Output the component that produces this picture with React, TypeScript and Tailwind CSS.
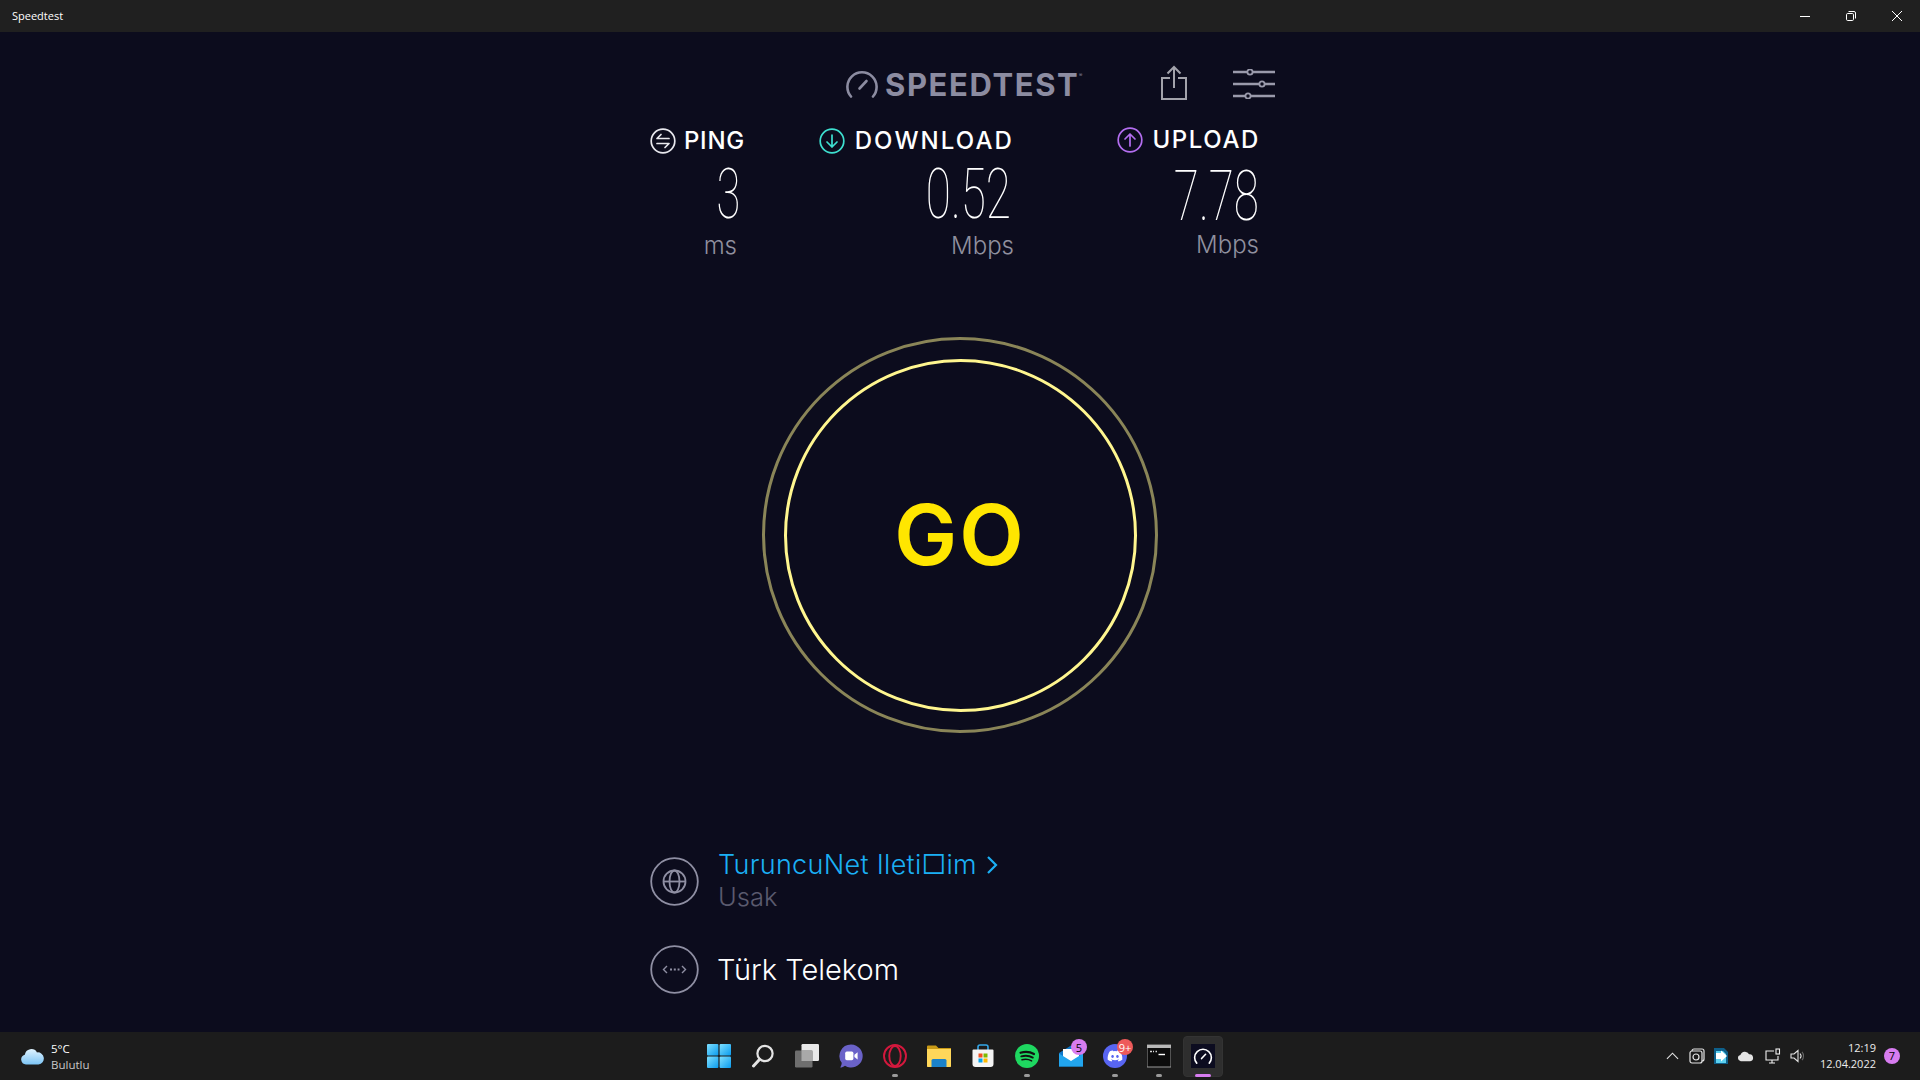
import React from "react";
import { FaDiscord } from "react-icons/fa";

const ui = { fontFamily: '"Open Sans", "Noto Sans", sans-serif' };
const brand = { fontFamily: 'Inter, "Liberation Sans", sans-serif' };

function Gauge({ className = "", stroke = "#8c8ca1", sw = 2.6 }: { className?: string; stroke?: string; sw?: number }) {
  return (
    <svg viewBox="0 0 34 28" className={className} fill="none" stroke={stroke} strokeWidth={sw} strokeLinecap="round">
      <path d="M6 26.5A14.6 14.6 0 1 1 28 26.5" />
      <path d="M14.5 18.5L21.5 11" />
    </svg>
  );
}

function Stat({ width, icon, label, value, unit, labelClass, valueClass, unitPr, scale }: any) {
  return (
    <div className="flex flex-col items-end" style={{ width }}>
      <div className={`flex h-[50px] items-center ${labelClass}`}>
        {icon}
        <span className="text-[24px] font-medium text-white">{label}</span>
      </div>
      <div className={`flex h-[56px] items-center ${valueClass}`}>
        <span
          className={`inline-block origin-right text-[70px] font-thin leading-[52px] text-white ${scale}`}
          style={{ fontFamily: 'Roboto, "Liberation Sans", sans-serif' }}
        >
          {value}
        </span>
      </div>
      <div className={`mt-[10px] flex h-[28px] items-center text-[24px] font-light leading-none text-[#90909f] ${unitPr}`}>{unit}</div>
    </div>
  );
}

function RoundIcon({ color, children }: { color: string; children: React.ReactNode }) {
  return (
    <svg viewBox="0 0 26 26" className="h-[26px] w-[26px]" fill="none" stroke={color} strokeWidth="1.7" strokeLinecap="round" strokeLinejoin="round">
      <circle cx="13" cy="13" r="11.8" />
      {children}
    </svg>
  );
}

function Tile({ children, dot, active, badge, badgeClass }: { children: React.ReactNode; dot?: boolean; active?: boolean; badge?: string; badgeClass?: string }) {
  return (
    <div className="relative flex h-12 w-11 items-center justify-center">
      {active && <div className="absolute left-[2px] top-[4px] h-[41px] w-10 rounded-[4px] border border-[#333333] bg-[#2e2e2e]" />}
      <div className="relative h-6 w-6">{children}</div>
      {badge && (
        <div
          className={`absolute top-[7px] flex h-4 min-w-4 items-center justify-center rounded-full px-[1px] text-[11px] leading-none ${badgeClass}`}
          style={ui}
        >
          {badge}
        </div>
      )}
      {dot && <div className="absolute bottom-[3px] left-[19px] h-[3px] w-[6px] rounded-full bg-[#9a9a9a]" />}
      {active && <div className="absolute bottom-[3px] left-[14px] h-[3px] w-4 rounded-full bg-[#d77cf0]" />}
    </div>
  );
}

export default function App() {
  return (
    <div className="flex h-screen w-full flex-col overflow-hidden bg-[#0c0c1d]">
      {/* title bar */}
      <div className="flex h-8 shrink-0 items-center justify-between bg-[#202020] pl-3 text-white" style={ui}>
        <span className="text-[11px]">Speedtest</span>
        <div className="flex">
          <div className="flex h-8 w-[46px] items-center justify-center">
            <div className="h-px w-[10px] bg-white" />
          </div>
          <div className="flex h-8 w-[46px] items-center justify-center">
            <svg viewBox="0 0 10 10" className="h-[10px] w-[10px]" fill="none" stroke="white" strokeWidth="1">
              <rect x="0.5" y="2.5" width="7" height="7" rx="1.2" />
              <path d="M2.5 .5H8A1.5 1.5 0 0 1 9.5 2V7.5" />
            </svg>
          </div>
          <div className="flex h-8 w-[46px] items-center justify-center">
            <svg viewBox="0 0 10 10" className="h-[10px] w-[10px]" stroke="white" strokeWidth="1">
              <path d="M0 0L10 10M10 0L0 10" />
            </svg>
          </div>
        </div>
      </div>

      {/* app */}
      <div className="mx-auto flex min-h-0 w-[640px] flex-1 flex-col" style={brand}>
        <div className="mt-[20px] flex h-16 items-center pl-[205px]">
          <Gauge className="h-[28px] w-[34px]" />
          <div className="relative ml-[6px] text-[31px] font-bold leading-none tracking-[1.6px] text-[#8c8ca1]">
            SPEEDTEST
            <span className="absolute -right-[3px] top-[4px] text-[5px] font-normal tracking-normal">®</span>
          </div>
          <svg viewBox="0 0 28 36" className="mb-[3px] ml-[81px] h-[36px] w-[28px]" fill="none" stroke="#a3a3ab" strokeWidth="2">
            <path d="M14 23V2M7.5 8.5L14 2l6.5 6.5" />
            <path d="M10 13H2V34H26V13H18" />
          </svg>
          <svg viewBox="0 0 42 30" className="ml-[45px] h-[30px] w-[42px]" fill="none" stroke="#9a9aab" strokeWidth="2.4">
            <path d="M0 3H14M20 3H42M0 15H26M32 15H42M0 27H12M18 27H42" />
            <circle cx="17" cy="3" r="2.6" strokeWidth="1.8" />
            <circle cx="29" cy="15" r="2.6" strokeWidth="1.8" />
            <circle cx="15" cy="27" r="2.6" strokeWidth="1.8" />
          </svg>
        </div>

        <div className="flex h-[144px] pr-[20px]">
          <Stat
            width={105}
            labelClass="gap-[8px] tracking-[0.75px]"
            valueClass="pr-[5px]"
            unitPr="pr-[8px]"
            scale="scale-x-[0.62]"
            label="PING"
            value="3"
            unit="ms"
            icon={
              <RoundIcon color="#e8e8ee">
                <path d="M19 10.5H7L11 6.5M7 15.5H19L15 19.5" />
              </RoundIcon>
            }
          />
          <Stat
            width={269}
            labelClass="gap-[10px] tracking-[2.1px]"
            valueClass="pr-[3px]"
            unitPr="pl-[1px]"
            scale="scale-x-[0.655]"
            label="DOWNLOAD"
            value="0.52"
            unit="Mbps"
            icon={
              <RoundIcon color="#3ee0d0">
                <path d="M13 7V19M8 14L13 19L18 14" />
              </RoundIcon>
            }
          />
          <Stat
            width={246}
            labelClass="-mt-px gap-[9px] tracking-[1.6px]"
            valueClass="mt-[3px] -mb-[3px] pr-[1px]"
            unitPr="pr-[1px]"
            scale="scale-x-[0.655]"
            label="UPLOAD"
            value="7.78"
            unit="Mbps"
            icon={
              <RoundIcon color="#b46ef0">
                <path d="M13 19V7M8 12L13 7L18 12" />
              </RoundIcon>
            }
          />
        </div>

        <div className="mt-[77px] flex h-[396px] w-[396px] shrink-0 items-center justify-center self-center rounded-full border-[3px] border-[#8a8558]">
          <div className="flex h-[353px] w-[353px] items-center justify-center rounded-full border-[3px] border-[#fff68f]">
            <span className="text-[84px] font-semibold leading-none tracking-[2px] text-[#ffe600]">GO</span>
          </div>
        </div>

        <div className="ml-[10px] mt-[115px] flex items-center gap-[19px]">
          <svg viewBox="0 0 49 49" className="h-[49px] w-[49px]" fill="none" stroke="#8f8fa3" strokeWidth="1.8">
            <circle cx="24.5" cy="24.5" r="23.3" />
            <circle cx="24.5" cy="24.5" r="11" />
            <ellipse cx="24.5" cy="24.5" rx="5" ry="11" />
            <path d="M13.5 24.5H35.5" />
          </svg>
          <div className="flex flex-col">
            <div className="flex h-[34px] items-center text-[27px] font-light tracking-[0.3px] text-[#1bb0f5]">
              <span>TuruncuNet Ileti□im</span>
              <svg viewBox="0 0 12 20" className="ml-[9px] h-[20px] w-[12px]" fill="none" stroke="#1bb0f5" strokeWidth="2.2">
                <path d="M2 2L10 10L2 18" />
              </svg>
            </div>
            <div className="h-[32px] text-[25.5px] font-light leading-[30px] text-[#5a5a6e]">Usak</div>
          </div>
        </div>

        <div className="ml-[10px] mt-[31px] flex items-center gap-[18px]">
          <svg viewBox="0 0 49 49" className="h-[49px] w-[49px]" fill="none" stroke="#8f8fa3" strokeWidth="1.8">
            <circle cx="24.5" cy="24.5" r="23.3" />
            <path d="M17 21L13.5 24.5L17 28M32 21L35.5 24.5L32 28" strokeWidth="1.4" />
            <path d="M20 24.5H29.5" strokeWidth="2" strokeDasharray="2 1.8" />
          </svg>
          <span className="text-[29px] font-light text-white">Türk Telekom</span>
        </div>
      </div>

      {/* taskbar */}
      <div className="grid h-12 shrink-0 grid-cols-[697px_528px_1fr] bg-[#1c1c1c] text-white" style={ui}>
        <div className="flex items-center pl-[20px]">
          <svg viewBox="0 0 24 18" className="h-[18px] w-6">
            <defs>
              <linearGradient id="cl" x1="0" y1="0" x2="0" y2="1">
                <stop offset="0" stopColor="#dff3ff" />
                <stop offset="1" stopColor="#7cc4f5" />
              </linearGradient>
            </defs>
            <path d="M6 17.5A5 5 0 0 1 4.8 7.7 6.6 6.6 0 0 1 17 5.4 6 6 0 0 1 18.5 17.5Z" fill="url(#cl)" />
          </svg>
          <div className="ml-[7px] mt-px flex flex-col text-[11.5px] leading-[16px]">
            <span>5°C</span>
            <span className="text-[#c8c8c8]">Bulutlu</span>
          </div>
        </div>

        <div className="flex items-center">
          <Tile>
            <svg viewBox="0 0 24 24" className="h-6 w-6">
              <defs>
                <linearGradient id="w" x1="0" y1="0" x2="1" y2="1">
                  <stop offset="0" stopColor="#7ee0ff" />
                  <stop offset="1" stopColor="#0a9bee" />
                </linearGradient>
              </defs>
              <rect x="0" y="0" width="11.4" height="11.4" rx="1" fill="url(#w)" />
              <rect x="12.6" y="0" width="11.4" height="11.4" rx="1" fill="url(#w)" />
              <rect x="0" y="12.6" width="11.4" height="11.4" rx="1" fill="url(#w)" />
              <rect x="12.6" y="12.6" width="11.4" height="11.4" rx="1" fill="url(#w)" />
            </svg>
          </Tile>
          <Tile>
            <svg viewBox="0 0 24 24" className="h-6 w-6" fill="none" stroke="#e4e4e4" strokeLinecap="round">
              <circle cx="14" cy="9.5" r="7.6" strokeWidth="2.2" />
              <path d="M8.5 15.5L2.5 22" strokeWidth="3" />
            </svg>
          </Tile>
          <Tile>
            <svg viewBox="0 0 24 24" className="h-6 w-6">
              <rect x="6.5" y="0" width="17.5" height="17" rx="1.2" fill="#e9e9e9" />
              <rect x="0" y="6.5" width="17.5" height="17" rx="1.2" fill="#6e6e6e" />
              <rect x="6.5" y="6.5" width="11" height="10.5" fill="#a9a9a9" />
            </svg>
          </Tile>
          <Tile>
            <svg viewBox="0 0 24 24" className="h-6 w-6">
              <path d="M12 0.5A11.5 11.5 0 1 1 6 21.7C4.5 22.8 3 23.4 1.2 23.5 2.2 22 2.7 20.3 2.7 18.8A11.5 11.5 0 0 1 12 0.5Z" fill="#6a62c8" />
              <rect x="6.2" y="7.6" width="8.2" height="8.6" rx="1.6" fill="white" />
              <path d="M15.4 10.8L18.6 8.3V15.5L15.4 13Z" fill="white" />
            </svg>
          </Tile>
          <Tile dot>
            <svg viewBox="0 0 24 24" className="h-6 w-6" fill="none" stroke="#d4183d" strokeWidth="1.9">
              <circle cx="12" cy="12" r="11" />
              <ellipse cx="12" cy="12" rx="5.7" ry="10" />
            </svg>
          </Tile>
          <Tile>
            <svg viewBox="0 0 24 24" className="h-6 w-6">
              <path d="M0 2.5A1 1 0 0 1 1 1.5H9L11.5 4H24V22A1 1 0 0 1 23 23H1A1 1 0 0 1 0 22Z" fill="#c99a16" />
              <path d="M0 5H24V22A1 1 0 0 1 23 23H1A1 1 0 0 1 0 22Z" fill="#ffd75a" />
              <path d="M4.5 16.5A1.5 1.5 0 0 1 6 15H18A1.5 1.5 0 0 1 19.5 16.5V23H4.5Z" fill="#1b82c9" />
            </svg>
          </Tile>
          <Tile>
            <svg viewBox="0 0 24 24" className="h-6 w-6">
              <path d="M7 6V3A2 2 0 0 1 9 1H15A2 2 0 0 1 17 3V6" fill="none" stroke="#33a6e8" strokeWidth="1.6" />
              <path d="M1.5 6.5A1 1 0 0 1 2.5 5.5H21.5A1 1 0 0 1 22.5 6.5V20A3 3 0 0 1 19.5 23H4.5A3 3 0 0 1 1.5 20Z" fill="#f4f4f4" />
              <rect x="7.5" y="9.5" width="4" height="4" fill="#f25022" />
              <rect x="12.5" y="9.5" width="4" height="4" fill="#7fba00" />
              <rect x="7.5" y="14.5" width="4" height="4" fill="#00a4ef" />
              <rect x="12.5" y="14.5" width="4" height="4" fill="#ffb900" />
            </svg>
          </Tile>
          <Tile dot>
            <svg viewBox="0 0 24 24" className="h-6 w-6" fill="none" stroke="#111" strokeLinecap="round">
              <circle cx="12" cy="12" r="12" fill="#1ed760" stroke="none" />
              <path d="M5.5 8.8C10 7.5 15 7.8 19 10" strokeWidth="2.2" />
              <path d="M6.3 12.4C10 11.4 14.5 11.7 17.8 13.6" strokeWidth="1.9" />
              <path d="M7 15.8C10.2 15 13.6 15.2 16.6 16.9" strokeWidth="1.5" />
            </svg>
          </Tile>
          <Tile badge="5" badgeClass="left-[22px] bg-[#d77cf0] text-black">
            <svg viewBox="0 0 24 24" className="h-6 w-6">
              <path d="M0 9L12 1.5L24 9V22.5H0Z" fill="#0f78c9" />
              <path d="M4 5H20V14L12 19L4 14Z" fill="#fff" />
              <path d="M0 9.5L12 17L24 9.5V22.5H0Z" fill="#22a5ee" />
            </svg>
          </Tile>
          <Tile dot badge="9+" badgeClass="left-[24px] bg-[#ee5a5a] text-white">
            <div className="flex h-6 w-6 items-center justify-center rounded-full bg-[#5865f2]">
              <FaDiscord className="text-[16px] text-white" />
            </div>
          </Tile>
          <Tile dot>
            <svg viewBox="0 0 24 24" className="h-6 w-6">
              <rect x="0" y="1" width="24" height="22" fill="#0c0c0c" stroke="#9a9a9a" strokeWidth="1" />
              <rect x="0" y="1" width="24" height="3" fill="#b8b8b8" />
              <path d="M3 7.5H5M6 7.5H7M8.5 7.5H10" stroke="#d8d8d8" strokeWidth="1.4" />
              <path d="M11.5 10.5H18" stroke="#ffffff" strokeWidth="1.4" />
            </svg>
          </Tile>
          <Tile active>
            <div className="flex h-6 w-6 items-center justify-center bg-[#0c0c20]">
              <Gauge className="h-[16px] w-[20px]" stroke="#ffffff" sw={2.8} />
            </div>
          </Tile>
        </div>

        <div className="flex items-center justify-end">
          <svg viewBox="0 0 14 8" className="mr-[10px] h-[8px] w-[13px]" fill="none" stroke="#e4e4e4" strokeWidth="1.2">
            <path d="M1 7L7 1L13 7" />
          </svg>
          <svg viewBox="0 0 16 16" className="mr-[8px] h-4 w-4" fill="none" stroke="#e4e4e4" strokeWidth="1.2">
            <rect x="3" y="1" width="12" height="12" rx="2" />
            <rect x="1" y="3" width="12" height="12" rx="2" fill="#1c1c1c" />
            <circle cx="7" cy="9" r="3" />
          </svg>
          <svg viewBox="0 0 16 16" className="mr-[8px] h-4 w-4">
            <path d="M1 0H11L15 4V16H1Z" fill="#0e5f8a" />
            <path d="M3 3H10L13 6V15H3Z" fill="#5cd0ef" />
            <path d="M3 5H8V2.5L14 8L8 13.5V11H3Z" fill="#fff" />
          </svg>
          <svg viewBox="0 0 18 12" className="mr-[11px] h-[12px] w-[17px]">
            <path d="M4 11.5A3.3 3.3 0 0 1 3.6 5 5 5 0 0 1 12.8 4.2 3.7 3.7 0 0 1 14 11.5Z" fill="#e4e4e4" />
          </svg>
          <svg viewBox="0 0 16 16" className="mr-[9px] h-4 w-4" fill="none" stroke="#f0f0f0" strokeWidth="1.1">
            <path d="M9 3H1V12H13V8" />
            <path d="M7 12V15M4 15H10" />
            <rect x="11" y="1" width="3.5" height="5" />
          </svg>
          <svg viewBox="0 0 16 16" className="mr-[14px] h-4 w-4" fill="none" stroke="#e4e4e4" strokeWidth="1.1">
            <path d="M1 6H4L8 2.5V13.5L4 10H1Z" />
            <path d="M10 5.5C11.3 7 11.3 9 10 10.5" />
            <path d="M12 3.8C14 6 14 10 12 12.2" stroke="#666" />
          </svg>
          <div className="flex flex-col items-end text-[11px] leading-[16px] text-[#ececec]">
            <span>12:19</span>
            <span>12.04.2022</span>
          </div>
          <div className="ml-[8px] mr-[20px] flex h-4 w-4 items-center justify-center rounded-full bg-[#d77cf0] text-[11px] text-black">
            7
          </div>
        </div>
      </div>
    </div>
  );
}
